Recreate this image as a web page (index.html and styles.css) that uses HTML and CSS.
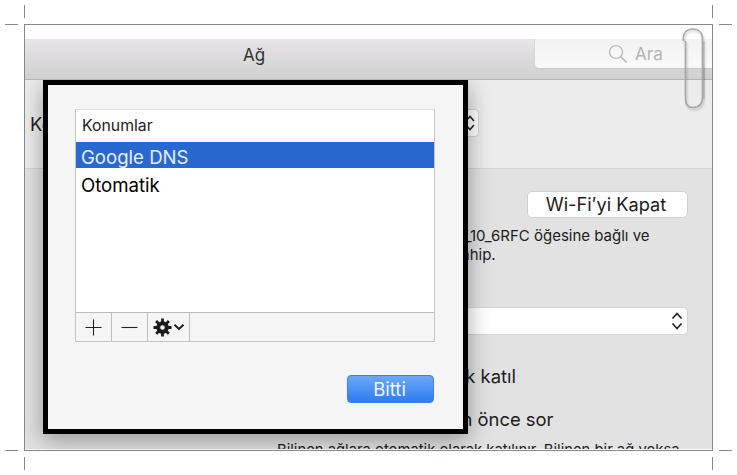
FILE: index.html
```html
<!DOCTYPE html>
<html lang="tr">
<head>
<meta charset="UTF-8">
<title>Ağ</title>
<link rel="stylesheet" href="styles.css">
</head>
<body>
<!-- crop marks -->
<i class="mark v m1"></i><i class="mark h m2"></i>
<i class="mark v m3"></i><i class="mark h m4"></i>
<i class="mark h m5"></i><i class="mark v m6"></i>
<i class="mark h m7"></i><i class="mark v m8"></i>

<div class="frame">
	<div class="titlebar">
		<div class="title">Ağ</div>
		<div class="search">
			<svg class="lens" width="20" height="20" viewBox="0 0 20 20"><circle cx="8" cy="8" r="6.5" fill="none" stroke="#b4b4b4" stroke-width="1.2"/><path d="M12.8 12.8L18.6 18.6" stroke="#b4b4b4" stroke-width="1.4" fill="none"/></svg>
			<span>Ara</span>
		</div>
	</div>
	<div class="locbar">
		<span class="loclabel">Konum:</span>
		<div class="locselect">
			<svg width="10" height="20" viewBox="0 0 10 20"><path d="M1 8L5 3.500L9 8M1 12L5 16.500L9 12" fill="none" stroke="#222" stroke-width="1.500"/></svg>
		</div>
	</div>
	<div class="main">
		<div class="col">
			<div class="wifibtn">Wi-Fi’yi Kapat</div>
			<p class="status">Wi-Fi açık durumda, ASUS_10_6RFC öğesine bağlı ve<br>192.168.1.134 IP adresine sahip.</p>
			<div class="netselect">
				<svg width="12" height="22" viewBox="0 0 12 22"><path d="M1.500 8.500L6 3.500L10.500 8.500M1.500 13.500L6 18.500L10.500 13.500" fill="none" stroke="#222" stroke-width="1.600"/></svg>
			</div>
			<div class="opt first">Bu ağa otomatik olarak katıl</div>
			<div class="opt second">Yeni ağlara katılmadan önce sor</div>
			<p class="note">Bilinen ağlara otomatik olarak katılınır. Bilinen bir ağ yoksa</p>
		</div>
	</div>

	<div class="sheet">
		<div class="list">
			<div class="listhead">Konumlar</div>
			<div class="row sel">Google DNS</div>
			<div class="row plain">Otomatik</div>
			<div class="listbody"></div>
			<div class="listfoot">
				<div class="fbtn">
					<svg width="17" height="17" viewBox="0 0 17 17"><path d="M8.500 0.500V16.500M0.500 8.500H16.500" stroke="#222" stroke-width="1.100" fill="none"/></svg>
				</div>
				<div class="fbtn">
					<svg width="17" height="17" viewBox="0 0 17 17"><path d="M0.500 8.500H16.500" stroke="#222" stroke-width="1.100" fill="none"/></svg>
				</div>
				<div class="fbtn gear">
					<svg width="19" height="19" viewBox="0 0 19 19">
						<circle cx="9.500" cy="9.500" r="4.300" fill="none" stroke="#1c1c1c" stroke-width="4"/>
						<path d="M9.500 0.500V18.500M0.500 9.500H18.500M3.100 3.100L15.900 15.900M15.900 3.100L3.100 15.900" fill="none" stroke="#1c1c1c" stroke-width="2.800" stroke-dasharray="4 10 4"/>
					</svg>
					<svg width="12" height="8" viewBox="0 0 12 8"><path d="M1.500 1.800L6 6L10.500 1.800" fill="none" stroke="#1c1c1c" stroke-width="2"/></svg>
				</div>
			</div>
		</div>
		<div class="sheetfoot">
			<div class="done">Bitti</div>
		</div>
	</div>

	<svg class="clip" width="26" height="84" viewBox="0 0 26 84">
		<path d="M3.500 14C2.500 7 6 2 12.500 2C19 2 22.500 6 22.500 12V70C22.500 77 19 80.500 13 80.500C7.500 80.500 5.500 77 5.500 71V14" fill="none" stroke="#a8a8a8" stroke-width="1.600"/>
		<path d="M24 14V72" fill="none" stroke="#000" stroke-opacity=".12" stroke-width="2"/>
	</svg>
</div>
</body>
</html>
```

FILE: styles.css
```css
html, body
{	margin:0;
	padding:0;
	background-color:white;
}
body
{	font-family:"Inter", "Liberation Sans", sans-serif;
	color:#1c1c1c;
	height:475px;
	overflow:hidden;
}

/* crop marks */
.mark
{	position:absolute;
	background-color:#888;
}
.mark.v
{	width:1px;
	height:13px;
}
.mark.h
{	width:13px;
	height:1px;
}
.m1 { left:24px; top:5px; }
.m2 { left:5px; top:24px; }
.m3 { left:712px; top:5px; }
.m4 { left:719px; top:24px; }
.m5 { left:5px; top:450px; }
.m6 { left:24px; top:457px; }
.m7 { left:719px; top:450px; }
.m8 { left:712px; top:457px; }

.frame
{	position:relative;
	box-sizing:border-box;
	margin:24px 0 0 24px;
	width:689px;
	height:427px;
	border:1px solid #888;
	padding-top:14px;
	overflow:hidden;
	background-color:white;
}

.titlebar
{	position:relative;
	z-index:2;
	height:40px;
	box-sizing:content-box;
	border-bottom:1px solid #b4b4b4;
	background:linear-gradient(#e7e5e7, #d0d0d0);
	display:flex;
	justify-content:flex-end;
}
.title
{	position:absolute;
	left:218px;
	top:5px;
	font-size:17px;
	line-height:22px;
	color:#333;
}
.search
{	width:178px;
	height:30px;
	box-sizing:border-box;
	border-bottom:1px solid #c6c6c6;
	border-left:1px solid #d6d6d6;
	border-bottom-left-radius:5px;
	background:linear-gradient(#f2f2f2, #f9f9f9);
	display:flex;
	align-items:center;
	padding-left:73px;
	gap:7px;
	font-size:17px;
	color:#b4b4b4;
}

.locbar
{	height:59px;
	padding-top:29px;
	border-bottom:1px solid #d4d4d4;
	background-color:#ececec;
	display:flex;
	font-size:18.4px;
}
.loclabel
{	box-sizing:border-box;
	width:100px;
	margin:4px 0 0 5px;
	line-height:22px;
}
.locselect
{	box-sizing:border-box;
	margin-left:291px;
	width:58px;
	height:28px;
	background-color:white;
	border:1px solid #d2d2d2;
	border-radius:4px;
	display:flex;
	align-items:center;
	justify-content:flex-end;
	padding-right:3px;
}

.main
{	height:280px;
	background-color:#e2e2e2;
	padding-left:252px;
	overflow:hidden;
}
.col
{	width:411px;
	padding-top:22px;
}
.wifibtn
{	box-sizing:border-box;
	margin-left:250px;
	width:161px;
	height:27px;
	padding-right:3px;
	background-color:white;
	border:1px solid #d0d0d0;
	border-radius:5px;
	text-align:center;
	font-size:18.2px;
	line-height:25px;
}
.status
{	margin:8px 0 0 0;
	font-size:15px;
	line-height:19px;
	white-space:nowrap;
}
.netselect
{	box-sizing:border-box;
	margin-top:43px;
	height:28px;
	background-color:white;
	border:1px solid #d4d4d4;
	border-radius:5px;
	display:flex;
	align-items:center;
	justify-content:flex-end;
	padding-right:4px;
}
.opt
{	font-size:18.4px;
	line-height:22px;
	white-space:nowrap;
}
.opt.first
{	margin-top:30px;
}
.opt.second
{	margin-top:21px;
}
.note
{	margin:11px 0 0 0;
	font-size:14.8px;
	line-height:19px;
	white-space:nowrap;
}

/* locations sheet */
.sheet
{	position:absolute;
	z-index:1;
	left:18px;
	top:55px;
	box-sizing:border-box;
	width:425px;
	height:354px;
	border:5px solid black;
	padding:24px 28px 0 27px;
	background-color:#f5f5f5;
	box-shadow:0 6px 22px rgba(0,0,0,0.35);
}
.list
{	box-sizing:border-box;
	height:233px;
	background-color:white;
	border:1px solid #c4c4c4;
	border-top-color:#dcdcdc;
	display:flex;
	flex-direction:column;
}
.listhead
{	height:32px;
	padding-left:6px;
	font-size:15.8px;
	line-height:31px;
	color:#222;
}
.row
{	padding-left:5px;
	font-size:18.6px;
	color:black;
}
.row.sel
{	height:26px;
	line-height:30px;
	overflow:hidden;
	background-color:#2a68d0;
	color:#e8eefa;
}
.row.plain
{	height:34px;
	line-height:34px;
}
.listbody
{	flex:1;
}
.listfoot
{	height:28px;
	background-color:#f5f5f5;
	border-top:1px solid #bcbcbc;
	display:flex;
}
.fbtn
{	box-sizing:border-box;
	width:36px;
	border-right:1px solid #bcbcbc;
	display:flex;
	align-items:center;
	justify-content:center;
}
.fbtn.gear
{	width:42px;
	gap:1px;
}
.sheetfoot
{	display:flex;
	justify-content:flex-end;
	margin:33px 1px 0 0;
}
.done
{	box-sizing:border-box;
	width:87px;
	height:28px;
	padding-right:2px;
	border-radius:4px;
	border:1px solid #3f80e8;
	background:linear-gradient(#6aa8f8, #2f7cf2);
	color:#f2f6fe;
	text-align:center;
	font-size:18.5px;
	line-height:27px;
}

.clip
{	position:absolute;
	z-index:3;
	left:655px;
	top:2px;
	filter:drop-shadow(1px 2px 1px rgba(0,0,0,0.2));
}
```
